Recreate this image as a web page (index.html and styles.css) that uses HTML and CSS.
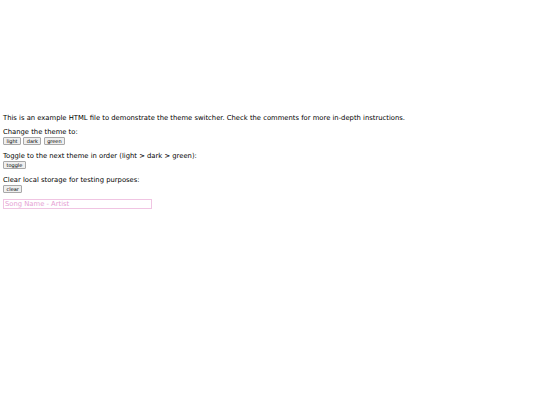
FILE: index.html
```html
<!DOCTYPE html>
<html>
<head>
<meta charset="utf-8">
<link rel="stylesheet" href="styles.css">
</head>
<body>
<main class="page">
  <p class="intro">This is an example HTML file to demonstrate the theme switcher. Check the comments for more in-depth instructions.</p>
  <p class="block">Change the theme to:<br>
    <button class="btn">light</button>
    <button class="btn">dark</button>
    <button class="btn">green</button>
  </p>
  <p class="block">Toggle to the next theme in order (light &gt; dark &gt; green):<br>
    <button class="btn">toggle</button>
  </p>
  <p class="block last">Clear local storage for testing purposes:<br>
    <button class="btn">clear</button>
  </p>
  <input class="song" type="text" placeholder="Song Name - Artist">
</main>
</body>
</html>
```
FILE: styles.css
```css
html, body {
  margin: 0;
  background: #ffffff;
}
body {
  font-family: "DejaVu Sans", Verdana, sans-serif;
  font-size: 6.8px;
  color: #000;
  padding: 114px 3px 0 3px;
}
.page p {
  margin: 0 0 7px 0;
  line-height: 8px;
}
.page .intro {
  margin-bottom: 6px;
}
.page .last {
  margin-bottom: 6px;
}
.btn {
  font-family: "DejaVu Sans", Verdana, sans-serif;
  font-size: 5px;
  line-height: 6px;
  padding: 0 2.5px;
  margin: 1px 0 0 0;
  border: 1px solid #a8a8a8;
  border-radius: 1px;
  background: #efefef;
  color: #000;
  vertical-align: top;
}
.song {
  display: block;
  width: 149px;
  height: 10px;
  box-sizing: border-box;
  margin: 0;
  padding: 0 1px;
  font-family: "DejaVu Sans", Verdana, sans-serif;
  font-size: 6.8px;
  border: 1px solid #f0c4e2;
  outline: none;
}
.song::placeholder {
  color: #e59ed2;
}
```
